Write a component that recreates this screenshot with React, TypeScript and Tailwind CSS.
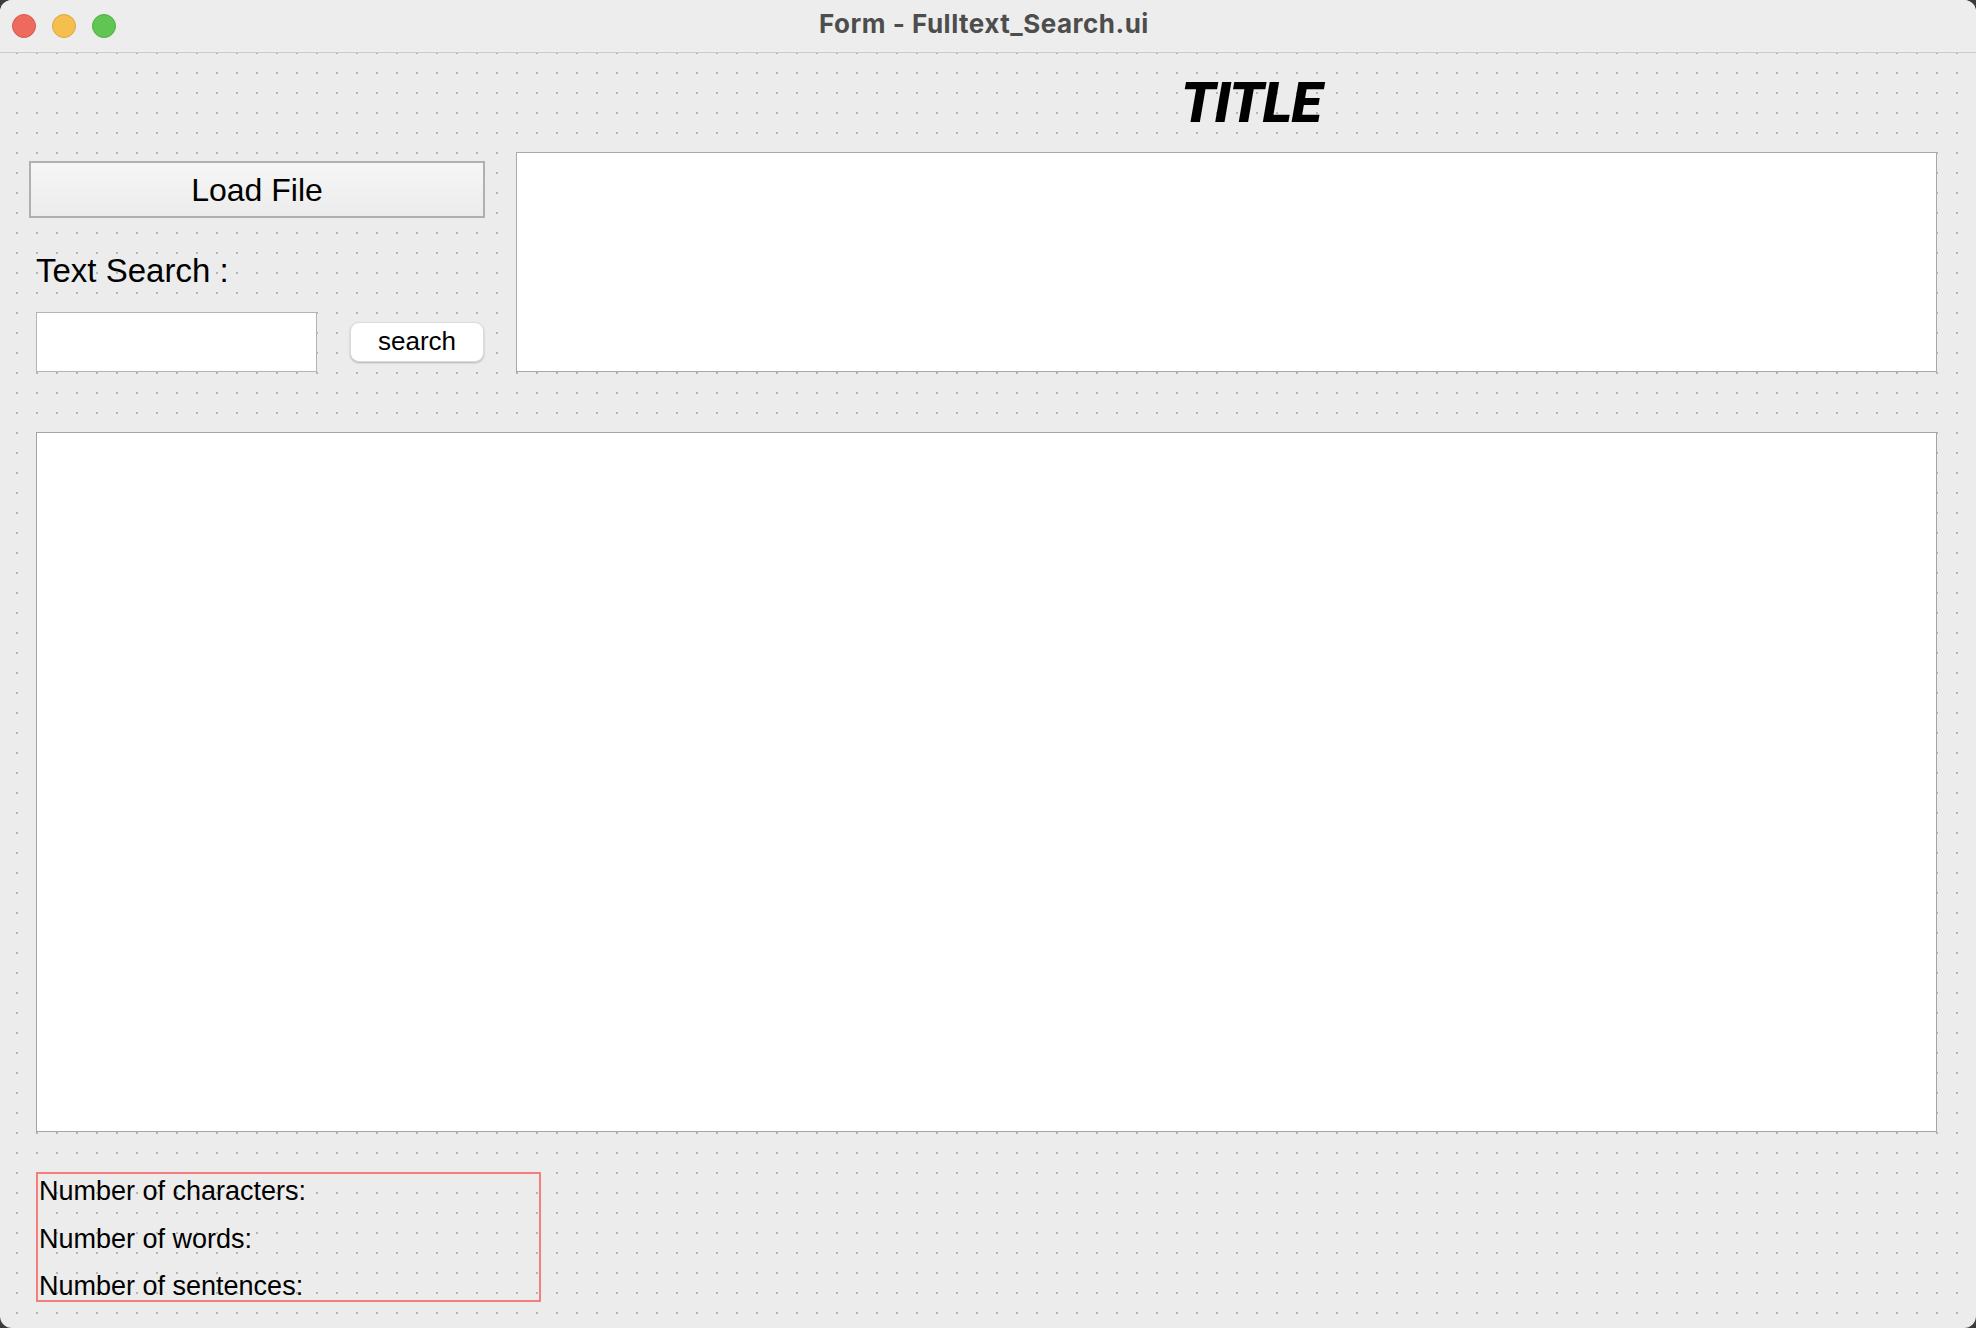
import React from "react";

export default function App() {
  return (
    <div className="w-[1976px] h-[1328px] bg-[#3c3c3c] overflow-hidden">
      <div className="w-full h-full rounded-[12px] overflow-hidden flex flex-col bg-[#ececec] bg-[radial-gradient(circle,#b5b5b5_1.1px,transparent_1.5px)] bg-[length:20px_20px] bg-[position:7px_3px]">
        {/* Title bar */}
        <div className="h-[53px] shrink-0 flex items-center bg-[#ededed] border-b border-[#cacaca]">
          <div className="w-[116px] flex items-center gap-[16px] pl-[12px]">
            <div className="w-[24px] h-[24px] rounded-full bg-[#ee6a5f] border border-[#d95a50]" />
            <div className="w-[24px] h-[24px] rounded-full bg-[#f5bf4f] border border-[#dca842]" />
            <div className="w-[24px] h-[24px] rounded-full bg-[#61c554] border border-[#52ad47]" />
          </div>
          <div className="flex-1 flex justify-center pb-[5px]">
            <span className="text-[26px] leading-[30px] font-bold text-[#4d4d4d] font-['Inter','Roboto',sans-serif] tracking-[0.5px]">
              Form - Fulltext_Search.ui
            </span>
          </div>
          <div className="w-[124px]" />
        </div>

        {/* Content */}
        <div className="flex-1 flex flex-col pl-[29px] pr-[39px] font-['Liberation_Sans','Arial',sans-serif] text-black">
          {/* Title row */}
          <div className="h-[99px] flex items-center pl-[1152px]">
            <span className="text-[56px] leading-none font-black italic font-['Roboto','Inter',sans-serif] tracking-[-0.8px]">
              TITLE
            </span>
          </div>

          {/* Top row */}
          <div className="flex items-start gap-[31px]">
            <div className="w-[456px] flex flex-col">
              <button className="mt-[9px] h-[57px] w-[456px] border-2 border-[#b0b0b0] bg-gradient-to-b from-[#f6f6f6] to-[#ececec] text-[32px] leading-none flex items-center justify-center">
                Load File
              </button>
              <div className="mt-[36px] ml-[7px] text-[33px] leading-[33px]">Text Search :</div>
              <div className="mt-[25px] flex items-center">
                <div className="ml-[7px] w-[281px] h-[60px] bg-white border border-[#b4b4b4]" />
                <button className="ml-[33px] w-[134px] h-[40px] rounded-[9px] bg-white border border-[#dcdcdc] shadow-[0_1px_2px_rgba(0,0,0,0.25)] text-[26px] leading-none flex items-center justify-center pb-[2px]">
                  search
                </button>
              </div>
            </div>
            <div className="flex-1 h-[220px] bg-white border border-[#a9a9a9]" />
          </div>

          {/* Big text area */}
          <div className="mt-[60px] ml-[7px] h-[700px] bg-white border border-[#a5a5a5]" />

          {/* Stats box */}
          <div className="mt-[40px] ml-[7px] w-[505px] h-[130px] border-2 border-[#f47d7d] pt-[4px] pl-[1px] flex flex-col gap-[20.5px] text-[27px] leading-[27px]">
            <div>Number of characters:</div>
            <div>Number of words:</div>
            <div>Number of sentences:</div>
          </div>
        </div>
      </div>
    </div>
  );
}
